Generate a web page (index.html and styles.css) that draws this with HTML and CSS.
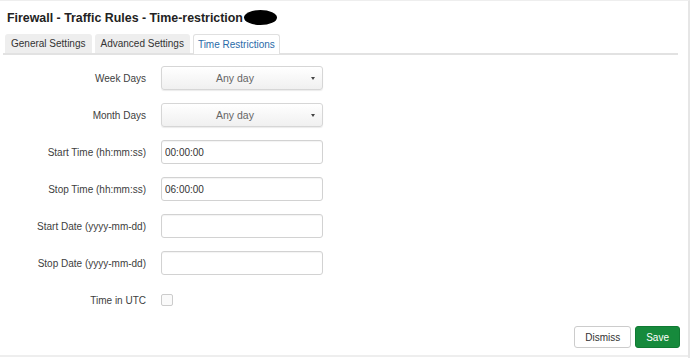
FILE: index.html
```html
<!DOCTYPE html>
<html lang="en">
<head>
  <meta charset="UTF-8">
  <meta name="viewport" content="width=device-width, initial-scale=1.0">
  <title>Firewall - Traffic Rules - Time-restriction</title>
  <link rel="stylesheet" href="styles.css">
</head>
<body>
  <div class="modal">
    <h3 class="modal-title">Firewall - Traffic Rules - Time-restriction<span class="redacted"></span></h3>

    <ul class="tabs">
      <li><a href="#">General Settings</a></li>
      <li><a href="#">Advanced Settings</a></li>
      <li class="active"><a href="#">Time Restrictions</a></li>
    </ul>

    <div class="form">
      <div class="row">
        <label>Week Days</label>
        <div class="select">Any day<span class="caret"></span></div>
      </div>
      <div class="row">
        <label>Month Days</label>
        <div class="select">Any day<span class="caret"></span></div>
      </div>
      <div class="row">
        <label>Start Time (hh:mm:ss)</label>
        <input type="text" value="00:00:00">
      </div>
      <div class="row">
        <label>Stop Time (hh:mm:ss)</label>
        <input type="text" value="06:00:00">
      </div>
      <div class="row">
        <label>Start Date (yyyy-mm-dd)</label>
        <input type="text" value="">
      </div>
      <div class="row">
        <label>Stop Date (yyyy-mm-dd)</label>
        <input type="text" value="">
      </div>
      <div class="row row-check">
        <label>Time in UTC</label>
        <span class="checkbox"></span>
      </div>
    </div>

    <div class="actions">
      <button class="btn">Dismiss</button>
      <button class="btn btn-save">Save</button>
    </div>
  </div>
</body>
</html>
```

FILE: styles.css
```css
*, *::before, *::after {
  box-sizing: border-box;
}

body {
  margin: 0;
  font-family: 'Liberation Sans', Arial, sans-serif;
  color: #333;
  background: #fff;
}

.modal {
  width: 690px;
  height: 358px;
  border-top: 1px solid #eee;
  border-right: 2px solid #e6e6e6;
  position: relative;
}

.modal-title {
  margin: 0;
  padding: 9px 0 0 7px;
  font-size: 12.4px;
  line-height: 16px;
  font-weight: bold;
  color: #222;
}

.redacted {
  display: inline-block;
  width: 33px;
  height: 15px;
  background: #000;
  border-radius: 50%;
  vertical-align: -3px;
  margin-left: 1px;
}

.tabs {
  list-style: none;
  margin: 8px 10px 0 3px;
  padding: 0 0 0 2px;
  display: flex;
  gap: 3px;
  border-bottom: 2px solid #e2e2e2;
}

.tabs li a {
  display: block;
  height: 19px;
  line-height: 20px;
  padding: 0 6px;
  font-size: 10px;
  color: #333;
  text-decoration: none;
  background: #eee;
  border-radius: 3px 3px 0 0;
}

.tabs li.active a {
  background: #fff;
  color: #2a6aa8;
  border: 1px solid #e0e0e0;
  border-bottom: none;
  padding: 0 4px;
  line-height: 19px;
  height: 20px;
  margin-bottom: -1px;
}

.form {
  padding-top: 11px;
}

.row {
  display: flex;
  align-items: center;
  height: 24px;
  margin-bottom: 13px;
}

.row label {
  width: 146px;
  text-align: right;
  font-size: 10px;
  color: #404040;
  margin-right: 15px;
}

.select {
  position: relative;
  width: 162px;
  height: 24px;
  line-height: 23px;
  padding-right: 14px;
  text-align: center;
  font-size: 10.5px;
  color: #666;
  border: 1px solid #d6d6d6;
  border-radius: 3px;
  background: linear-gradient(#fff, #f0f0f0);
  box-shadow: 0 1px 1px rgba(0, 0, 0, 0.08);
}

.caret {
  position: absolute;
  right: 7px;
  top: 10px;
  width: 0;
  height: 0;
  border-left: 2px solid transparent;
  border-right: 2px solid transparent;
  border-top: 3px solid #444;
}

.row input {
  width: 162px;
  height: 24px;
  padding: 0 3px;
  font-family: inherit;
  font-size: 10px;
  color: #333;
  border: 1px solid #d2d2d2;
  border-radius: 3px;
  box-shadow: inset 0 1px 1px rgba(0, 0, 0, 0.05);
  outline: none;
}

.row-check {
  margin-top: 11px;
}

.checkbox {
  display: inline-block;
  width: 12px;
  height: 12px;
  border: 1px solid #ccc;
  border-radius: 2px;
  background: #fafafa;
}

.actions {
  position: absolute;
  right: 8px;
  top: 325px;
  display: flex;
  gap: 4px;
}

.btn {
  height: 22px;
  padding: 0 10px;
  font-family: inherit;
  font-size: 10px;
  color: #333;
  background: #fff;
  border: 1px solid #ccc;
  border-radius: 3px;
  cursor: pointer;
}

.btn-save {
  color: #fff;
  background: #168a3c;
  border-color: #107a33;
}

.modal::after {
  content: "";
  position: absolute;
  left: 0;
  right: 0;
  top: 354px;
  height: 2px;
  background: #eee;
}
```
